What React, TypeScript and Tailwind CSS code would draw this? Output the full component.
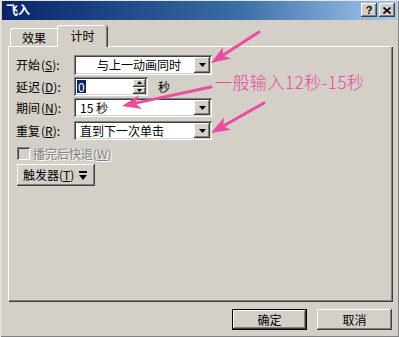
import React from "react";

const RAISED =
  "shadow-[inset_-1px_-1px_0_#404040,inset_1px_1px_0_#ffffff,inset_-2px_-2px_0_#808080,inset_2px_2px_0_#d4d0c8]";
const SUNKEN =
  "shadow-[inset_1px_1px_0_#808080,inset_-1px_-1px_0_#ffffff,inset_2px_2px_0_#404040,inset_-2px_-2px_0_#d4d0c8]";

const FONT = { fontFamily: "'Noto Sans CJK SC', 'Liberation Sans', sans-serif" };

function Tri() {
  return (
    <svg width="7" height="4" viewBox="0 0 7 4">
      <polygon points="0,0 7,0 3.5,4" fill="#000" />
    </svg>
  );
}

function Combo({ text, center }: { text: string; center?: boolean }) {
  return (
    <div className={`relative w-[138px] h-full bg-white ${SUNKEN} flex items-center`}>
      <div className={`flex-1 h-full flex items-center ${center ? "justify-center pl-[10px]" : "pl-[6px]"} text-[12px] text-black leading-none`}>
        {text}
      </div>
      <div className={`w-[16px] h-[calc(100%-4px)] mr-[2px] bg-[#d4d0c8] ${RAISED} flex items-center justify-center`}>
        <Tri />
      </div>
    </div>
  );
}

function Label({ t, k }: { t: string; k: string }) {
  return (
    <div className="w-[58px] text-[12px] text-black leading-none whitespace-nowrap">
      {t}<span className="ml-[1px]">(</span><span className="underline">{k}</span>):
    </div>
  );
}

function Arrow({ sx, sy, tx, ty }: { sx: number; sy: number; tx: number; ty: number }) {
  const dx = tx - sx;
  const dy = ty - sy;
  const len = Math.hypot(dx, dy);
  const ux = dx / len;
  const uy = dy / len;
  const nx = -uy;
  const ny = ux;
  const L = 19;
  const W = 7;
  const bx = tx - ux * L;
  const by = ty - uy * L;
  const mx = tx - ux * L * 0.72;
  const my = ty - uy * L * 0.72;
  const pts = `${tx},${ty} ${bx + nx * W},${by + ny * W} ${mx},${my} ${bx - nx * W},${by - ny * W}`;
  return (
    <g>
      <line x1={sx} y1={sy} x2={mx} y2={my} stroke="#ec4c9f" strokeWidth="3" strokeLinecap="round" />
      <polygon points={pts} fill="#ec4c9f" />
    </g>
  );
}

export default function App() {
  return (
    <div className="relative w-[399px] h-[337px] bg-[#d4d0c8] overflow-hidden" style={FONT}>
      <div className="absolute inset-0 shadow-[inset_1px_1px_0_#e8e6e1,inset_-1px_-1px_0_#808080] pointer-events-none" />
      {/* Title bar */}
      <div className="mx-[2px] h-[20px] flex items-center bg-gradient-to-r from-[#0a246a] via-[#3a6ea5] via-60% to-[#a6caf0]">
        <div className="pl-[4px] text-[12px] font-bold text-white leading-none">飞入</div>
        <div className="ml-auto flex gap-[2px] pr-[2px]">
          <div className={`w-[16px] h-[14px] bg-[#d4d0c8] ${RAISED} flex items-center justify-center text-[11px] font-bold leading-none text-black`} style={{ fontFamily: "'Liberation Sans', sans-serif" }}>
            ?
          </div>
          <div className={`w-[16px] h-[14px] bg-[#d4d0c8] ${RAISED} flex items-center justify-center`}>
            <svg width="8" height="7" viewBox="0 0 8 7">
              <path d="M0.5 0.5 L7.5 6.5 M7.5 0.5 L0.5 6.5" stroke="#000" strokeWidth="1.6" />
            </svg>
          </div>
        </div>
      </div>

      {/* Tabs */}
      <div className="flex items-end pl-[10px] pt-[5px] h-[26px]">
        <div className="w-[47px] h-[18px] border-t border-l border-white rounded-tl-[3px] flex items-center justify-center text-[12px] leading-none text-black">
          效果
        </div>
        <div className="relative z-10 -mb-[1px] w-[50px] h-[22px] bg-[#d4d0c8] border-t border-l border-white rounded-t-[3px] shadow-[inset_-1px_0_0_#808080,1px_0_0_#404040] flex items-start justify-center pt-[4px] text-[12px] leading-none text-black">
          计时
        </div>
      </div>

      {/* Panel */}
      <div className="mx-[8px] w-[384px] h-[255px] border-t border-l border-white shadow-[inset_-1px_-1px_0_#808080,1px_1px_0_#404040] pl-[7px] pt-[8px] flex flex-col">
        <div className="flex items-center h-[20px]">
          <Label t="开始" k="S" />
          <Combo text="与上一动画同时" center />
        </div>
        <div className="flex items-center h-[19px] mt-[2px]">
          <Label t="延迟" k="D" />
          <div className={`relative w-[74px] h-full bg-white ${SUNKEN} flex items-center`}>
            <div className="flex-1 pl-[3px] flex items-center">
              <span className="bg-[#0a246a] text-white text-[12px] leading-[13px] px-[1px]">0</span>
            </div>
            <div className="w-[13px] h-[calc(100%-4px)] mr-[2px] flex flex-col">
              <div className={`flex-1 bg-[#d4d0c8] ${RAISED} flex items-center justify-center`}>
                <svg width="5" height="3" viewBox="0 0 5 3"><polygon points="2.5,0 5,3 0,3" fill="#000" /></svg>
              </div>
              <div className={`flex-1 bg-[#d4d0c8] ${RAISED} flex items-center justify-center`}>
                <svg width="5" height="3" viewBox="0 0 5 3"><polygon points="0,0 5,0 2.5,3" fill="#000" /></svg>
              </div>
            </div>
          </div>
          <div className="ml-[10px] text-[12px] leading-none text-black">秒</div>
        </div>
        <div className="flex items-center h-[19px] mt-[2px]">
          <Label t="期间" k="N" />
          <Combo text="15 秒" />
        </div>
        <div className="flex items-center h-[19px] mt-[4px]">
          <Label t="重复" k="R" />
          <Combo text="直到下一次单击" />
        </div>
        <div className="flex items-center h-[13px] mt-[7px] pl-[1px]">
          <div className={`w-[13px] h-[13px] bg-[#d4d0c8] ${SUNKEN}`} />
          <div className="ml-[3px] text-[12px] leading-none text-[#808080] [text-shadow:1px_1px_0_#ffffff] whitespace-nowrap">
            播完后快退(<span className="underline">W</span>)
          </div>
        </div>
        <div className={`mt-[4px] ml-[1px] w-[78px] h-[22px] bg-[#d4d0c8] ${RAISED} flex items-center pl-[6px] gap-[5px]`}>
          <span className="text-[12px] leading-none text-black whitespace-nowrap">
            触发器(<span className="underline">T</span>)
          </span>
          <svg width="8" height="9" viewBox="0 0 8 9">
            <rect x="0" y="0" width="8" height="2" fill="#000" />
            <polygon points="0,4 8,4 4,9" fill="#000" />
          </svg>
        </div>
      </div>

      {/* Footer buttons */}
      <div className="flex justify-end gap-[10px] pr-[7px] mt-[8px]">
        <div className="w-[75px] h-[21px] border border-black">
          <div className={`w-full h-full bg-[#d4d0c8] ${RAISED} flex items-center justify-center text-[12px] leading-none text-black`}>
            确定
          </div>
        </div>
        <div className={`w-[75px] h-[21px] bg-[#d4d0c8] ${RAISED} flex items-center justify-center text-[12px] leading-none text-black`}>
          取消
        </div>
      </div>

      {/* Annotation overlay */}
      <div className="absolute left-[215px] top-[71px] text-[17px] font-light tracking-[0.5px] leading-[22px] text-[#e8489c] whitespace-nowrap">
        一般输入12秒-15秒
      </div>
      <svg className="absolute inset-0 pointer-events-none" width="399" height="337" viewBox="0 0 399 337">
        <Arrow sx={259} sy={32} tx={211} ty={63} />
        <Arrow sx={211} sy={87} tx={122} ty={106} />
        <Arrow sx={264} sy={103} tx={211} ty={133} />
      </svg>
    </div>
  );
}
